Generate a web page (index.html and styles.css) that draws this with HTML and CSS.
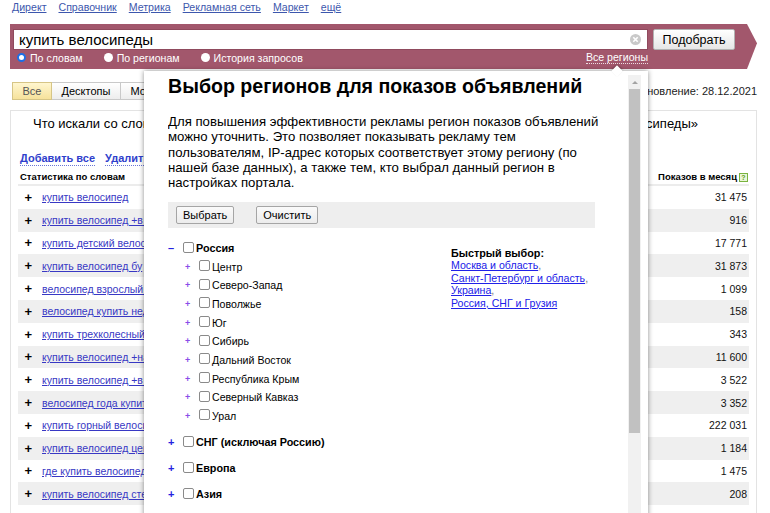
FILE: index.html
```html
<!DOCTYPE html>
<html lang="ru">
<head>
<meta charset="utf-8">
<title>Подбор слов — купить велосипеды</title>
<link rel="stylesheet" href="styles.css">
</head>
<body>
<nav class="topnav">
  <a href="#">Директ</a>
  <a href="#">Справочник</a>
  <a href="#">Метрика</a>
  <a href="#">Рекламная сеть</a>
  <a href="#">Маркет</a>
  <a href="#">ещё</a>
</nav>

<div class="band">
  <div class="band-main">
    <div class="search-input">
      <span class="query">купить велосипеды</span>
      <svg class="clear" width="11" height="11" viewBox="0 0 11 11"><circle cx="5.5" cy="5.5" r="5.5" fill="#c9c9c9"/><path d="M3.3 3.3 L7.7 7.7 M7.7 3.3 L3.3 7.7" stroke="#fff" stroke-width="1.6"/></svg>
    </div>
    <div class="radio-row">
      <span class="radio"><span class="dot on"></span>По словам</span>
      <span class="radio"><span class="dot"></span>По регионам</span>
      <span class="radio"><span class="dot"></span>История запросов</span>
      <a class="regions" href="#">Все регионы</a>
    </div>
  </div>
  <button class="btn-go">Подобрать</button>
</div>

<div class="tabs-row">
  <div class="tabs">
    <span class="tab active">Все</span>
    <span class="tab">Десктопы</span>
    <span class="tab">Мобильные</span>
  </div>
  <div class="updated">Последнее обновление: 28.12.2021</div>
</div>

<section class="results">
  <div class="res-title">
    <span>Что искали со словами «купить велосипеды»</span>
    <span>Похожие на «купить велосипеды»</span>
  </div>
  <div class="res-actions">
    <a class="dash" href="#">Добавить все</a>
    <a class="dash" href="#">Удалить все</a>
  </div>
  <div class="res-head">
    <span>Статистика по словам</span>
    <span class="res-head-r">Показов в месяц<span class="help">?</span></span>
  </div>
  <ul class="rows">
    <li class="row"><span class="add">+</span><a href="#">купить велосипед</a><span class="num">31 475</span></li>
    <li class="row"><span class="add">+</span><a href="#">купить велосипед +в москве</a><span class="num">916</span></li>
    <li class="row"><span class="add">+</span><a href="#">купить детский велосипед</a><span class="num">17 771</span></li>
    <li class="row"><span class="add">+</span><a href="#">купить велосипед бу</a><span class="num">31 873</span></li>
    <li class="row"><span class="add">+</span><a href="#">велосипед взрослый купить</a><span class="num">1 099</span></li>
    <li class="row"><span class="add">+</span><a href="#">велосипед купить недорого</a><span class="num">158</span></li>
    <li class="row"><span class="add">+</span><a href="#">купить трехколесный велосипед</a><span class="num">343</span></li>
    <li class="row"><span class="add">+</span><a href="#">купить велосипед +на авито</a><span class="num">11 600</span></li>
    <li class="row"><span class="add">+</span><a href="#">купить велосипед +в спб</a><span class="num">3 522</span></li>
    <li class="row"><span class="add">+</span><a href="#">велосипед года купить</a><span class="num">3 352</span></li>
    <li class="row"><span class="add">+</span><a href="#">купить горный велосипед</a><span class="num">222 031</span></li>
    <li class="row"><span class="add">+</span><a href="#">купить велосипед цена</a><span class="num">1 184</span></li>
    <li class="row"><span class="add">+</span><a href="#">где купить велосипед</a><span class="num">1 475</span></li>
    <li class="row"><span class="add">+</span><a href="#">купить велосипед стелс</a><span class="num">208</span></li>
    <li class="row"><span class="add">+</span><a href="#">купить велосипед скоростной</a><span class="num">501</span></li>
  </ul>
</section>

<div class="modal">
  <div class="modal-body">
    <h1 class="modal-title">Выбор регионов для показов объявлений</h1>
    <p class="modal-text">Для повышения эффективности рекламы регион показов объявлений<br>можно уточнить. Это позволяет показывать рекламу тем<br>пользователям, IP-адрес которых соответствует этому региону (по<br>нашей базе данных), а также тем, кто выбрал данный регион в<br>настройках портала.</p>
    <div class="modal-bar">
      <button class="mbtn">Выбрать</button>
      <button class="mbtn">Очистить</button>
    </div>
    <div class="tree-wrap">
      <ul class="tree">
        <li class="node">
          <div class="node-row"><span class="tog">–</span><span class="cb"></span><b>Россия</b></div>
          <ul class="sub">
            <li class="sub-row"><span class="tog-s">+</span><span class="cb"></span>Центр</li>
            <li class="sub-row"><span class="tog-s">+</span><span class="cb"></span>Северо-Запад</li>
            <li class="sub-row"><span class="tog-s">+</span><span class="cb"></span>Поволжье</li>
            <li class="sub-row"><span class="tog-s">+</span><span class="cb"></span>Юг</li>
            <li class="sub-row"><span class="tog-s">+</span><span class="cb"></span>Сибирь</li>
            <li class="sub-row"><span class="tog-s">+</span><span class="cb"></span>Дальний Восток</li>
            <li class="sub-row"><span class="tog-s">+</span><span class="cb"></span>Республика Крым</li>
            <li class="sub-row"><span class="tog-s">+</span><span class="cb"></span>Северный Кавказ</li>
            <li class="sub-row"><span class="tog-s">+</span><span class="cb"></span>Урал</li>
          </ul>
        </li>
        <li class="node"><div class="node-row"><span class="tog">+</span><span class="cb"></span><b>СНГ (исключая Россию)</b></div></li>
        <li class="node"><div class="node-row"><span class="tog">+</span><span class="cb"></span><b>Европа</b></div></li>
        <li class="node"><div class="node-row"><span class="tog">+</span><span class="cb"></span><b>Азия</b></div></li>
      </ul>
      <div class="quick">
        <b>Быстрый выбор:</b><br>
        <a href="#">Москва и область</a>,<br>
        <a href="#">Санкт-Петербург и область</a>,<br>
        <a href="#">Украина</a>,<br>
        <a href="#">Россия, СНГ и Грузия</a>
      </div>
    </div>
  </div>
  <div class="scrollbar">
    <div class="sb-arrow"></div>
    <div class="sb-thumb"></div>
  </div>
</div>
</body>
</html>
```

FILE: styles.css
```css
* { box-sizing: border-box; }
html, body { margin: 0; padding: 0; }
body {
  width: 770px;
  height: 513px;
  overflow: hidden;
  position: relative;
  background: #fff;
  color: #000;
  font-family: "Liberation Sans", Arial, sans-serif;
  font-size: 11px;
}
ul { list-style: none; margin: 0; padding: 0; }

/* top navigation */
.topnav {
  display: flex;
  gap: 12px;
  height: 24px;
  padding: 1px 0 0 12px;
  font-size: 10.6px;
  line-height: 13px;
}
.topnav a { color: #3d57ad; text-decoration: underline; }

/* search band */
.band {
  display: flex;
  gap: 5px;
  width: 747px;
  height: 45px;
  margin-left: 10px;
  padding: 5px 3px 0 3px;
  background: #a2576c;
  clip-path: polygon(0 0, 737px 0, 100% 43%, 737px 100%, 0 100%);
}
.band-main { width: 635px; }
.search-input {
  display: flex;
  align-items: center;
  height: 21px;
  padding: 0 6px 0 5px;
  background: #fff;
  border: 1px solid #8f4a5d;
  font-size: 15px;
}
.clear { margin-left: auto; }
.radio-row {
  display: flex;
  align-items: center;
  gap: 21px;
  height: 15px;
  padding-left: 4px;
  color: #fff;
  font-size: 10.6px;
}
.radio { display: flex; align-items: center; gap: 4px; }
.dot {
  width: 9px;
  height: 9px;
  border-radius: 50%;
  background: #fff;
}
.dot.on { border: 2px solid #1d6fe6; }
.regions {
  margin-left: auto;
  color: #fff;
  text-decoration: none;
  border-bottom: 1px dotted rgba(255,255,255,0.8);
  line-height: 12px;
}
.btn-go {
  width: 82px;
  height: 21px;
  padding: 0;
  font-family: inherit;
  font-size: 12.5px;
  color: #000;
  background: linear-gradient(#ffffff, #e6e6e6);
  border: 1px solid #b3b3b3;
  border-radius: 2px;
}

/* tabs */
.tabs-row {
  display: flex;
  justify-content: space-between;
  align-items: center;
  height: 18px;
  margin: 13px 13px 0 12px;
}
.tabs { display: flex; }
.tab {
  height: 18px;
  padding: 0 9.5px;
  line-height: 16px;
  border: 1px solid #c9c9c9;
  border-left: none;
  background: linear-gradient(#ffffff, #ededed);
  font-size: 11px;
  white-space: nowrap;
}
.tab.active {
  border-left: 1px solid #cdbb80;
  border-color: #d6c586;
  background: linear-gradient(#fff6cf, #f6e29b);
  color: #555;
}
.updated { font-size: 11px; color: #222; }

/* results */
.results {
  margin: 10px 13px 0 10px;
  padding: 0 7px;
  border: 1px solid #e3e3e3;
  border-bottom: none;
}
.res-title {
  display: flex;
  justify-content: space-between;
  padding: 5px 51px 0 15px;
  font-size: 13px;
  line-height: 16px;
}
.res-actions {
  display: flex;
  gap: 10px;
  margin-top: 19px;
  padding-left: 2px;
  font-size: 11px;
  font-weight: bold;
  line-height: 14px;
}
.dash {
  color: #2f3fcc;
  text-decoration: none;
  border-bottom: 1px dotted #6a76d6;
}
.res-head {
  display: flex;
  justify-content: space-between;
  margin-top: 5px;
  padding: 0 1px 1px 2px;
  font-size: 9.5px;
  font-weight: bold;
  line-height: 12px;
  border-bottom: 2px solid #ececec;
}
.res-head-r { display: flex; align-items: center; gap: 2px; }
.help {
  width: 9px;
  height: 9px;
  border: 1px solid #79b33e;
  background: #eaf6d8;
  color: #5a9a20;
  font-size: 7px;
  line-height: 7px;
  text-align: center;
}
.row {
  display: flex;
  align-items: center;
  height: 22.8px;
  padding: 0 2px 0 6.5px;
  font-size: 10.5px;
}
.row:nth-child(even) { background: #efefef; }
.add {
  width: 8px;
  margin-right: 9.5px;
  font-size: 13px;
  font-weight: bold;
  line-height: 13px;
}
.row a { color: #3838c4; text-decoration: underline; }
.num { margin-left: auto; color: #111; }

/* modal */
.modal {
  position: absolute;
  left: 144px;
  top: 71px;
  width: 504px;
  height: 460px;
  display: flex;
  padding: 4px 7px 0 24px;
  background: #fff;
  box-shadow: 0 0 5px rgba(0,0,0,0.45);
}
.modal::before {
  content: "";
  position: absolute;
  left: 469px;
  top: -4px;
  width: 8px;
  height: 8px;
  background: #fff;
  transform: rotate(45deg);
  box-shadow: -1px -1px 2px rgba(0,0,0,0.25);
}
.modal-body {
  flex: 1;
  padding-right: 33px;
  overflow: hidden;
}
.modal-title {
  margin: 0;
  font-size: 19.6px;
  line-height: 23px;
  font-weight: bold;
}
.modal-text {
  margin: 16px 0 0;
  font-size: 13.2px;
  line-height: 15.3px;
  white-space: nowrap;
}
.modal-bar {
  display: flex;
  gap: 22px;
  height: 26px;
  margin-top: 11.5px;
  padding: 4px 8px;
  background: #eeeeee;
}
.mbtn {
  height: 18px;
  padding: 0 6px;
  font-family: inherit;
  font-size: 11px;
  color: #000;
  background: linear-gradient(#fafafa, #ececec);
  border: 1px solid #a5a5a5;
  border-radius: 2px;
}
.tree-wrap {
  display: flex;
  margin-top: 10.7px;
}
.tree { width: 283px; }
.node { margin-bottom: 7.5px; }
.node-row, .sub-row {
  display: flex;
  align-items: center;
  height: 18.66px;
  font-size: 10.6px;
}
.node-row b { font-size: 10.8px; }
.tog {
  width: 15px;
  color: #2323e0;
  font-weight: bold;
  font-size: 11px;
}
.sub-row { padding-left: 17px; }
.tog-s {
  width: 14px;
  color: #8a4be8;
  font-size: 9px;
  font-weight: bold;
}
.cb {
  width: 11px;
  height: 11px;
  margin: -2px 2px 0 0;
  border: 1px solid #8a8a8a;
  border-radius: 2px;
  background: #fff;
}
.quick {
  margin-top: 8px;
  font-size: 10.6px;
  line-height: 12.5px;
  color: #777;
}
.quick b { color: #000; font-size: 10.8px; }
.quick a { color: #2020e8; text-decoration: underline; }

.scrollbar {
  width: 13px;
  background: #f1f1f1;
}
.sb-arrow {
  height: 14px;
  display: flex;
  justify-content: center;
  padding-top: 6px;
}
.sb-arrow::before {
  content: "";
  border-left: 3px solid transparent;
  border-right: 3px solid transparent;
  border-bottom: 3px solid #a3a3a3;
  height: 0;
}
.sb-thumb {
  height: 344px;
  margin: 0 1px;
  background: #c1c1c1;
}
```
